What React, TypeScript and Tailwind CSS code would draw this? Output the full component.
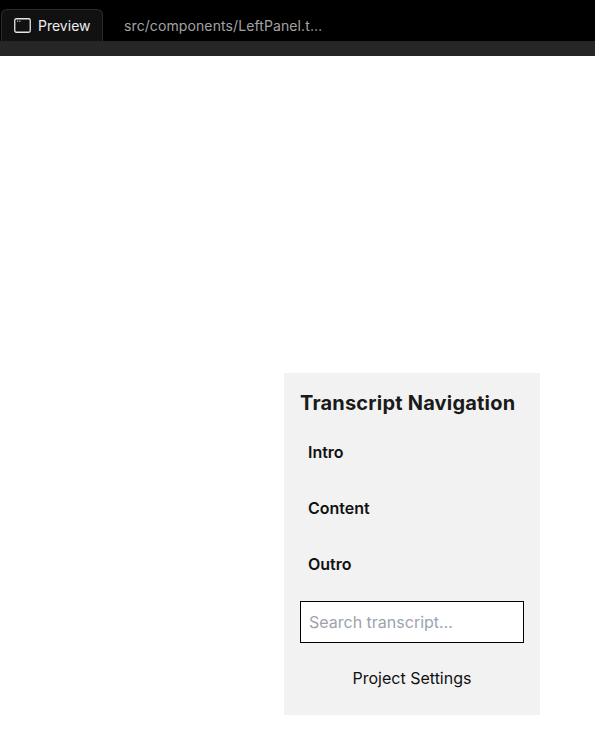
import React from "react";

const PreviewIcon = () => (
  <svg width="17" height="15" viewBox="0 0 17 15" fill="none">
    <rect x="0.75" y="0.75" width="15.5" height="13.5" rx="1.5" stroke="#e5e5e5" strokeWidth="1.3" />
    <line x1="3" y1="3.2" x2="4.2" y2="3.2" stroke="#e5e5e5" strokeWidth="1" />
    <line x1="5.2" y1="3.2" x2="6.4" y2="3.2" stroke="#e5e5e5" strokeWidth="1" />
  </svg>
);

const sections = ["Intro", "Content", "Outro"];

export default function App() {
  return (
    <div className="min-h-[741px] bg-white font-['Inter',sans-serif]">
      <div className="h-[41px] bg-black flex items-end pl-px">
        <div className="h-[32px] w-[102px] flex items-center gap-[7px] pl-[12px] bg-[#111111] border border-b-0 border-[#2c2c2c] rounded-t-[6px]">
          <PreviewIcon />
          <span className="text-[14px] text-[#ededed]">Preview</span>
        </div>
        <div className="h-[32px] flex items-center pl-[21px] text-[14px] text-[#a3a3a3] tracking-[0.1px]">
          src/components/LeftPanel.t…
        </div>
      </div>
      <div className="h-[15px] bg-[#262626]" />

      <div className="pt-[317px] pl-[284px]">
        <div className="w-[256px] bg-[#f2f2f2] p-[16px]">
          <h2 className="text-[20px] leading-[28px] font-bold text-[#1a1a1a] tracking-[0.2px]">
            Transcript Navigation
          </h2>
          <div className="mt-[7px]">
            {sections.map((s) => (
              <div key={s} className="h-[56px] flex items-center px-[8px] text-[16px] font-semibold text-[#111]">
                {s}
              </div>
            ))}
          </div>
          <input
            placeholder="Search transcript…"
            className="mt-[9px] w-full h-[42px] border border-black bg-white px-[8px] text-[16px] placeholder:text-[#9ca3af] outline-none"
          />
          <button className="mt-[14px] w-full h-[42px] text-[16px] text-[#111] text-center">
            Project Settings
          </button>
        </div>
      </div>
    </div>
  );
}
